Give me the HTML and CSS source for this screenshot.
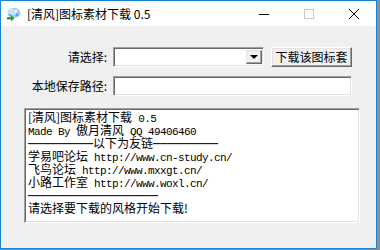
FILE: index.html
```html
<!DOCTYPE html>
<html lang="zh-CN">
<head>
    <meta charset="UTF-8">
    <title>[清风]图标素材下载 0.5</title>
    <link rel="stylesheet" href="styles.css">
</head>
<body>
    <div class="window">
        <div class="titlebar">
            <svg class="app-icon" width="16" height="16" viewBox="0 0 16 16">
                <ellipse cx="9" cy="7" rx="6.5" ry="5" fill="#9cc8ee"/>
                <ellipse cx="7" cy="6" rx="4" ry="3.5" fill="#c6e2f8"/>
                <circle cx="11" cy="5" r="1.3" fill="#fff"/>
                <circle cx="5" cy="9" r="1" fill="#5f9fd8"/>
                <circle cx="12" cy="9" r="1.2" fill="#5f9fd8"/>
                <path d="M2 11 h4 v-2 l3.5 3.2 -3.5 3.2 v-2 h-4 z" fill="#2da12d"/>
            </svg>
            <span class="title">[清风]图标素材下载 0.5</span>
            <div class="controls">
                <span class="ctl">
                    <svg width="10" height="10" viewBox="0 0 10 10"><path d="M0 5.5 h10" stroke="#000" stroke-width="1"/></svg>
                </span>
                <span class="ctl">
                    <svg width="10" height="10" viewBox="0 0 10 10"><rect x="0.5" y="0.5" width="9" height="9" fill="none" stroke="#c8c8c8"/></svg>
                </span>
                <span class="ctl">
                    <svg width="10" height="10" viewBox="0 0 10 10"><path d="M0 0 L10 10 M10 0 L0 10" stroke="#000" stroke-width="1"/></svg>
                </span>
            </div>
        </div>

        <div class="client">
            <div class="form">
                <label class="label">请选择:</label>
                <div class="combo">
                    <span class="combo-text"></span>
                    <span class="drop"><span class="arrow"></span></span>
                </div>
                <button class="btn">下载该图标套</button>

                <label class="label">本地保存路径:</label>
                <input class="field path" type="text">
            </div>

            <div class="log">
                <div class="line">[清风]图标素材下载<span class="en"> 0.5</span></div>
                <div class="line"><span class="en">Made By </span>傲月清风<span class="en"> QQ 49406460</span></div>
                <div class="line"><span class="rule">─────────</span>以下为友链<span class="rule">─────────</span></div>
                <div class="line">学易吧论坛<span class="en"> http://www.cn-study.cn/</span></div>
                <div class="line">飞鸟论坛<span class="en"> http://www.mxxgt.cn/</span></div>
                <div class="line ruled">小路工作室<span class="en"> http://www.woxl.cn/</span></div>
                <div class="line"><span class="rule">──────────────────</span></div>
                <div class="line">请选择要下载的风格开始下载!</div>
            </div>
        </div>
    </div>
</body>
</html>
```

FILE: styles.css
```css
* {
    margin: 0;
    padding: 0;
    box-sizing: border-box;
}
body {
    font-family: "Noto Sans CJK SC", "Liberation Sans", sans-serif;
    font-size: 12px;
    color: #000;
    background-color: #8f8f8f;
    width: 380px;
    height: 250px;
    overflow: hidden;
}
.window {
    width: 377px;
    height: 249px;
    border: 1px solid #1883d7;
    background-color: #f0f0f0;
    display: flex;
    flex-direction: column;
}
.titlebar {
    height: 25px;
    background-color: #fff;
    display: flex;
    align-items: center;
    padding-left: 4px;
}
.app-icon {
    flex: none;
}
.title {
    margin-left: 6px;
    line-height: 25px;
    flex: 1;
}
.controls {
    display: flex;
    height: 25px;
}
.ctl {
    width: 45px;
    display: flex;
    align-items: center;
    justify-content: center;
}
.client {
    flex: 1;
    padding-top: 21px;
}
.form {
    display: grid;
    grid-template-columns: 106px 151px 82px;
    grid-template-rows: 20px 20px;
    column-gap: 6px;
    row-gap: 9px;
}
.label {
    text-align: right;
    line-height: 20px;
}
.combo,
.field {
    background-color: #fff;
    border: 1px solid;
    border-color: #a0a0a0 #fff #fff #a0a0a0;
    box-shadow: inset 1px 1px #696969, inset -1px -1px #e3e3e3;
}
.combo {
    display: flex;
    padding: 2px 1px 2px 2px;
}
.combo-text {
    flex: 1;
}
.drop {
    width: 16px;
    background-color: #f0f0f0;
    border: 1px solid;
    border-color: #e3e3e3 #696969 #696969 #e3e3e3;
    box-shadow: inset -1px -1px #a0a0a0;
    display: flex;
    align-items: center;
    justify-content: center;
}
.arrow {
    width: 0;
    height: 0;
    border-left: 4px solid transparent;
    border-right: 4px solid transparent;
    border-top: 4px solid #000;
    margin-left: -1px;
}
.btn {
    font-family: inherit;
    font-size: 12px;
    color: #000;
    background-color: #f0f0f0;
    border: 1px solid;
    border-color: #fff #696969 #696969 #fff;
    box-shadow: inset -1px -1px #a0a0a0, inset 1px 1px #e3e3e3;
    margin-left: 1px;
    line-height: 16px;
}
.path {
    grid-column: 2 / 4;
    outline: none;
}
.log {
    margin: 12px 0 0 23px;
    width: 336px;
    height: 115px;
    overflow: hidden;
    background-color: #fff;
    border: 1px solid;
    border-color: #a0a0a0 #fff #fff #a0a0a0;
    box-shadow: inset 1px 1px #696969, inset -1px -1px #e3e3e3;
    padding: 1px 0 0 3px;
}
.line {
    height: 13px;
    line-height: 13px;
    white-space: nowrap;
}
.en {
    font-family: "Liberation Mono", monospace;
    font-size: 11px;
    letter-spacing: -0.6px;
}
.rule {
    font-family: "DejaVu Sans Mono", monospace;
    font-size: 12px;
}
```
